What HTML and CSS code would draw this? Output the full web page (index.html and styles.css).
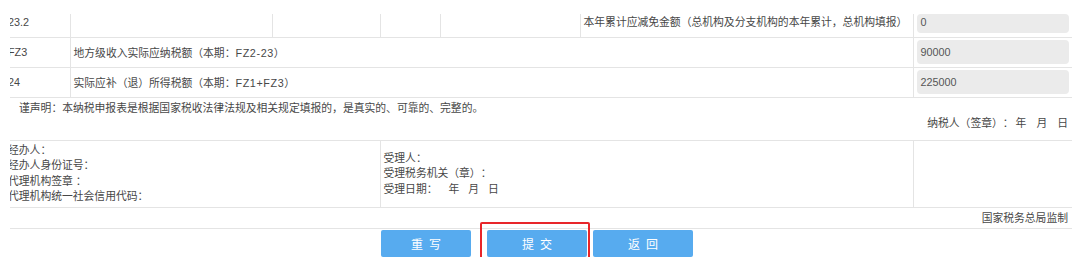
FILE: index.html
```html
<!DOCTYPE html>
<html lang="zh-CN">
<head>
    <meta charset="UTF-8">
    <meta name="viewport" content="width=device-width, initial-scale=1.0">
    <title>企业所得税月（季）度预缴纳税申报表</title>
    <link rel="stylesheet" href="styles.css">
</head>
<body>
    <div class="sheet">
        <div class="sheet-inner">
            <table class="grid">
                <colgroup>
                    <col class="c-code">
                    <col class="c-a">
                    <col class="c-b">
                    <col class="c-c">
                    <col class="c-d">
                    <col class="c-e">
                    <col class="c-val">
                </colgroup>
                <tr class="row-first">
                    <td class="code">23.2</td>
                    <td></td>
                    <td></td>
                    <td></td>
                    <td></td>
                    <td class="label">本年累计应减免金额（总机构及分支机构的本年累计，总机构填报）</td>
                    <td class="val"><div class="box">0</div></td>
                </tr>
                <tr>
                    <td class="code">FZ3</td>
                    <td class="label" colspan="5">地方级收入实际应纳税额（本期：<span class="latin">FZ2-23</span>）</td>
                    <td class="val"><div class="box">90000</div></td>
                </tr>
                <tr>
                    <td class="code">24</td>
                    <td class="label" colspan="5">实际应补（退）所得税额（本期：<span class="latin">FZ1+FZ3</span>）</td>
                    <td class="val"><div class="box">225000</div></td>
                </tr>
            </table>

            <div class="decl">
                <p class="decl-text">谨声明：本纳税申报表是根据国家税收法律法规及相关规定填报的，是真实的、可靠的、完整的。</p>
                <p class="decl-sign">纳税人（签章）：<span class="d1">年</span><span class="d2">月</span><span class="d2">日</span></p>
            </div>

            <table class="sign">
                <colgroup>
                    <col class="s-left">
                    <col class="s-mid">
                    <col class="s-right">
                </colgroup>
                <tr>
                    <td class="s-agent">
                        经办人：<br>
                        经办人身份证号：<br>
                        代理机构签章 ：<br>
                        代理机构统一社会信用代码：
                    </td>
                    <td class="s-tax">
                        受理人：<br>
                        受理税务机关（章）：<br>
                        受理日期：<span class="t1">年</span><span class="t2">月</span><span class="t2">日</span>
                    </td>
                    <td></td>
                </tr>
            </table>

            <div class="made">国家税务总局监制</div>
        </div>
    </div>

    <div class="actions">
        <button class="btn btn-reset">重写</button>
        <span class="mark"><button class="btn btn-submit">提交</button></span>
        <button class="btn">返回</button>
    </div>
</body>
</html>
```

FILE: styles.css
```css
body {
    margin: 0;
    padding-top: 14px;
    font-family: "Liberation Sans", "Noto Sans CJK SC", sans-serif;
    font-size: 10.8px;
    color: #474747;
    background: #fff;
    text-spacing-trim: space-all;
    font-feature-settings: "chws" 0, "halt" 0, "palt" 0;
    font-kerning: none;
}
.sheet {
    margin-left: 10px;
    width: 1062px;
    overflow: hidden;
}
.sheet-inner {
    margin-left: -4px;
    width: 1066px;
}
.grid,
.sign {
    width: 1066px;
    border-collapse: collapse;
    table-layout: fixed;
}
.grid td,
.sign td {
    padding: 0;
    border-bottom: 1px solid #e4e4e4;
    border-left: 1px solid #e4e4e4;
}
.grid td:first-child,
.sign td:first-child {
    border-left: none;
}
.c-code { width: 64px; }
.c-a { width: 202px; }
.c-b { width: 108px; }
.c-c { width: 60px; }
.c-d { width: 140px; }
.c-e { width: 333px; }
.c-val { width: 159px; }
.grid tr {
    height: 30px;
}
.grid tr.row-first {
    height: 23px;
}
.row-first td {
    vertical-align: top;
    line-height: 17px;
}
.grid .code {
    padding-left: 2px;
}
.grid .label {
    padding-left: 3px;
    white-space: nowrap;
}
.latin {
    letter-spacing: 0.6px;
}
.grid .val {
    padding: 2px 3px;
}
.grid .row-first .val {
    padding: 0 3px 3px;
}
.box {
    height: 24px;
    line-height: 24px;
    padding-left: 4px;
    background: #ebebeb;
    border-radius: 4px;
    color: #555;
}
.row-first .box {
    height: 19px;
    line-height: 17px;
}
.decl {
    box-sizing: border-box;
    height: 43px;
    padding: 3px 4px 0 13px;
    border-bottom: 1px solid #e4e4e4;
}
.decl p {
    margin: 0;
    height: 15px;
    line-height: 15px;
}
.decl-sign {
    text-align: right;
}
.decl-sign .d1 {
    margin-left: 2px;
}
.decl-sign .d2 {
    margin-left: 10px;
}
.s-left { width: 374px; }
.s-mid { width: 533px; }
.s-right { width: 159px; }
.sign tr {
    height: 67px;
}
.sign td {
    vertical-align: middle;
    line-height: 15.5px;
}
.s-agent {
    padding-left: 2px !important;
}
.s-tax {
    padding-left: 3px !important;
}
.s-tax .t1 {
    margin-left: 11px;
}
.s-tax .t2 {
    margin-left: 9px;
}
.made {
    height: 20px;
    line-height: 21px;
    padding-right: 4px;
    text-align: right;
    border-bottom: 1px solid #e4e4e4;
}
.actions {
    display: flex;
    padding-left: 381px;
    margin-top: 1px;
}
.btn {
    height: 27px;
    width: 100px;
    border: none;
    border-radius: 2px;
    background: #57abef;
    color: #fff;
    font-family: "Liberation Sans", "Noto Sans CJK SC", sans-serif;
    font-size: 12px;
    letter-spacing: 6px;
    padding: 0 0 0 6px;
    cursor: pointer;
}
.btn-reset {
    width: 90px;
    margin-right: 16px;
}
.mark {
    position: relative;
    margin-right: 6px;
}
.mark::after {
    content: "";
    position: absolute;
    top: -8px;
    left: -7px;
    right: -3px;
    bottom: -4px;
    border: 2px solid #e8262a;
    border-radius: 2px;
}
```
